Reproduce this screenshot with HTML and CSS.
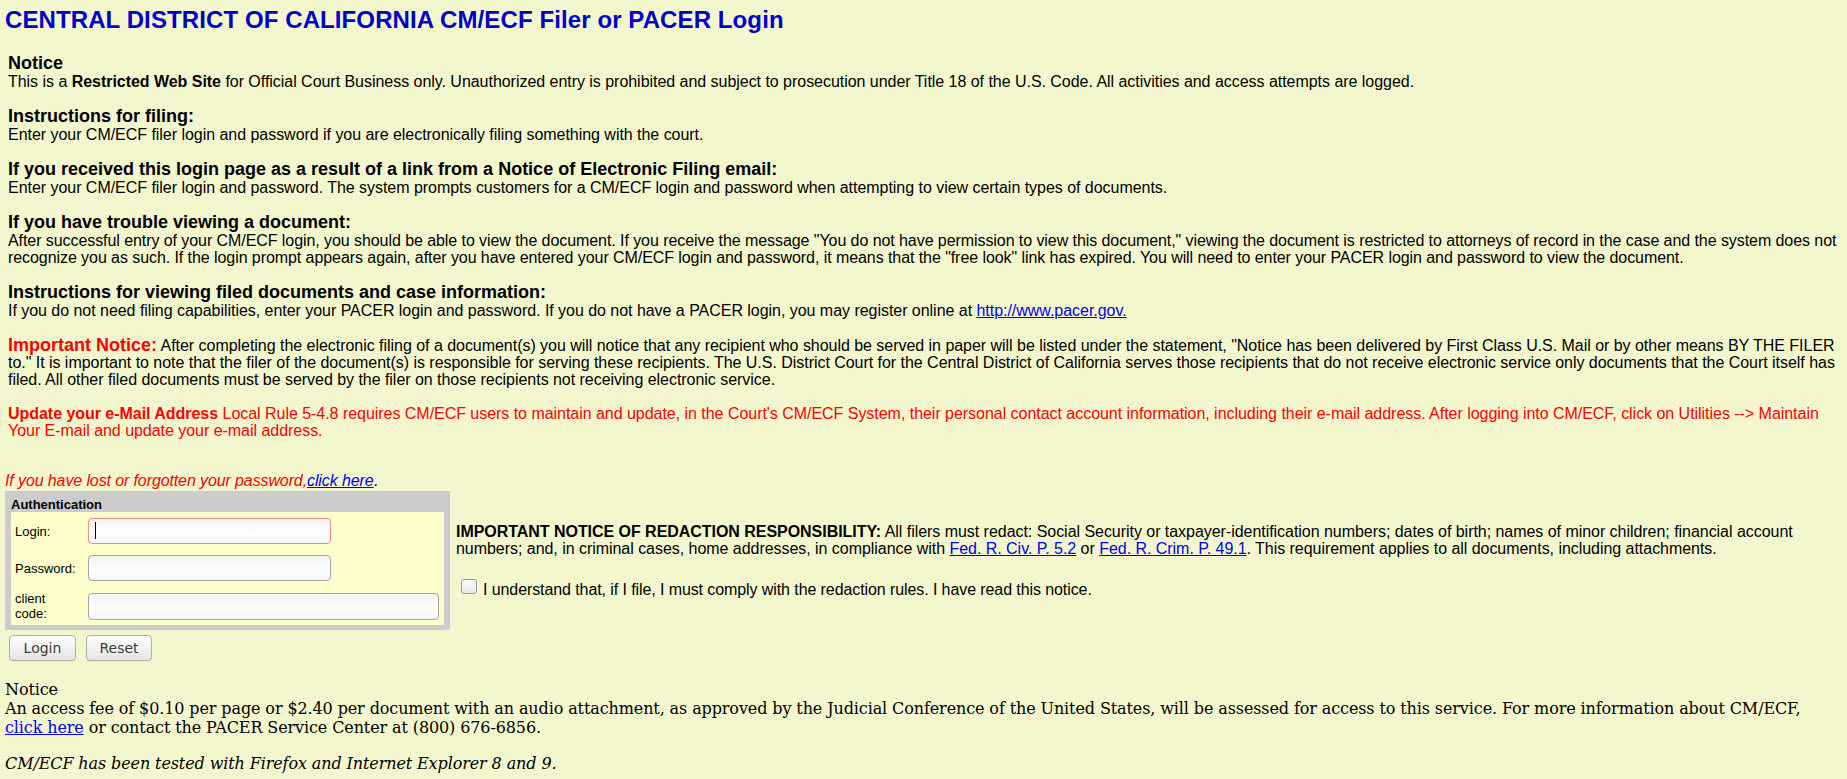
FILE: index.html
```html
<!DOCTYPE html>
<html>
<head>
<meta charset="utf-8">
<title>CM/ECF Login</title>
<link rel="stylesheet" href="styles.css">
</head>
<body>
<div class="page">
  <h1 class="title">CENTRAL DISTRICT OF CALIFORNIA CM/ECF Filer or PACER Login</h1>

  <div class="notice">
    <div class="sec">
      <h2 class="sec-head">Notice</h2>
      <p class="sec-body">This is a <b>Restricted Web Site</b> for Official Court Business only. Unauthorized entry is prohibited and subject to prosecution under Title 18 of the U.S. Code. All activities and access attempts are logged.</p>
    </div>
    <div class="sec">
      <h2 class="sec-head">Instructions for filing:</h2>
      <p class="sec-body">Enter your CM/ECF filer login and password if you are electronically filing something with the court.</p>
    </div>
    <div class="sec">
      <h2 class="sec-head">If you received this login page as a result of a link from a Notice of Electronic Filing email:</h2>
      <p class="sec-body">Enter your CM/ECF filer login and password. The system prompts customers for a CM/ECF login and password when attempting to view certain types of documents.</p>
    </div>
    <div class="sec">
      <h2 class="sec-head">If you have trouble viewing a document:</h2>
      <p class="sec-body sec-body-tight">After successful entry of your CM/ECF login, you should be able to view the document. If you receive the message "You do not have permission to view this document," viewing the document is restricted to attorneys of record in the case and the system does not recognize you as such. If the login prompt appears again, after you have entered your CM/ECF login and password, it means that the "free look" link has expired. You will need to enter your PACER login and password to view the document.</p>
    </div>
    <div class="sec">
      <h2 class="sec-head">Instructions for viewing filed documents and case information:</h2>
      <p class="sec-body">If you do not need filing capabilities, enter your PACER login and password. If you do not have a PACER login, you may register online at <a href="#">http://www.pacer.gov.</a></p>
    </div>
    <div class="sec sec-important">
      <p class="sec-body"><span class="imp-label">Important Notice:</span> After completing the electronic filing of a document(s) you will notice that any recipient who should be served in paper will be listed under the statement, "Notice has been delivered by First Class U.S. Mail or by other means BY THE FILER to." It is important to note that the filer of the document(s) is responsible for serving these recipients. The U.S. District Court for the Central District of California serves those recipients that do not receive electronic service only documents that the Court itself has filed. All other filed documents must be served by the filer on those recipients not receiving electronic service.</p>
    </div>
    <div class="sec sec-update">
      <p class="sec-body red"><b>Update your e-Mail Address</b> Local Rule 5-4.8 requires CM/ECF users to maintain and update, in the Court's CM/ECF System, their personal contact account information, including their e-mail address. After logging into CM/ECF, click on Utilities --&gt; Maintain Your E-mail and update your e-mail address.</p>
    </div>
  </div>

  <p class="lost">If you have lost or forgotten your password,<a href="#">click here</a><span class="dot">.</span></p>

  <div class="auth-row">
    <div class="authbox">
      <div class="auth-title">Authentication</div>
      <div class="auth-grid">
        <label class="auth-label">Login:</label>
        <span class="field field-focus"><input class="inp inp-short inp-focus" type="text"></span>
        <label class="auth-label">Password:</label>
        <span class="field"><input class="inp inp-short" type="password"></span>
        <label class="auth-label auth-label-2">client code:</label>
        <span class="field"><input class="inp inp-long" type="text"></span>
      </div>
    </div>
    <div class="redact">
      <p class="redact-text"><b>IMPORTANT NOTICE OF REDACTION RESPONSIBILITY:</b> All filers must redact: Social Security or taxpayer-identification numbers; dates of birth; names of minor children; financial account numbers; and, in criminal cases, home addresses, in compliance with <a href="#">Fed. R. Civ. P. 5.2</a> or <a href="#">Fed. R. Crim. P. 49.1</a>. This requirement applies to all documents, including attachments.</p>
      <p class="agree"><input class="chk" type="checkbox">I understand that, if I file, I must comply with the redaction rules. I have read this notice.</p>
    </div>
  </div>

  <div class="buttons">
    <button class="btn btn-login" type="button">Login</button>
    <button class="btn btn-reset" type="button">Reset</button>
  </div>

  <div class="footer">
    <div class="foot-text">Notice<br>An access fee of $0.10 per page or $2.40 per document with an audio attachment, as approved by the Judicial Conference of the United States, will be assessed for access to this service. For more information about CM/ECF, <a href="#">click here</a> or contact the PACER Service Center at (800) 676-6856.</div>
    <p class="tested">CM/ECF has been tested with Firefox and Internet Explorer 8 and 9.</p>
  </div>
</div>
</body>
</html>
```

FILE: styles.css
```css
html, body {
  margin: 0;
  padding: 0;
}

body {
  background: #f4f7cd;
  color: #000;
  font-family: "Liberation Sans", Arial, sans-serif;
  font-size: 16px;
}

a {
  color: #0000ee;
  text-decoration: underline;
}

.page {
  padding: 6px 5px 0 5px;
}

.title {
  margin: 0;
  font-size: 24px;
  line-height: 27px;
  font-weight: bold;
  color: #0000cc;
  letter-spacing: 0.1px;
}

.notice {
  margin-top: 20.5px;
  margin-right: -3px;
  padding-left: 3px;
}

.sec + .sec {
  margin-top: 16.8px;
}

.sec.sec-important {
  margin-top: 17.3px;
}

.sec.sec-update {
  margin-top: 16.5px;
}

.sec-head {
  margin: 0;
  font-size: 18px;
  line-height: 19px;
  font-weight: bold;
}

.sec-body {
  margin: 0;
  font-size: 16px;
  line-height: 17.3px;
  letter-spacing: -0.035px;
}

.sec-body-tight {
  letter-spacing: -0.07px;
}

.red {
  color: #ff0000;
}

.imp-label {
  color: #ff0000;
  font-weight: bold;
  font-size: 18px;
  letter-spacing: 0;
}

.lost {
  margin: 32px 0 0 0;
  font-style: italic;
  color: #ff0000;
  line-height: 17.3px;
  letter-spacing: -0.11px;
}

.dot {
  color: #000;
  font-style: normal;
}

.auth-row {
  display: flex;
  align-items: center;
  gap: 6px;
  margin-top: 2.3px;
}

.authbox {
  flex: none;
  width: 433px;
  background: #cccccc;
  padding: 6px 6px 5px 6px;
}

.auth-title {
  font-size: 13px;
  line-height: 15px;
  font-weight: bold;
}

.auth-grid {
  background: #ffffcc;
  display: grid;
  grid-template-columns: 60px 1fr;
  grid-template-rows: 26px 26px 29px;
  column-gap: 13px;
  row-gap: 11px;
  padding: 6px 5px 4px 4px;
  align-items: center;
}

.auth-label {
  font-size: 13px;
  line-height: 15px;
}

.auth-label-2 {
  line-height: 14.5px;
}

.field {
  position: relative;
  display: flex;
  align-items: center;
}

.inp {
  box-sizing: border-box;
  margin: 0;
  height: 26px;
  border: 1px solid #a6a6a6;
  border-radius: 4px;
  background: linear-gradient(to bottom, #f4f4f4, #fdfdfd 60%, #f6f6f6);
  font-family: "DejaVu Sans", sans-serif;
  font-size: 13px;
  padding: 0 6px;
  outline: none;
}

.inp-short {
  width: 243px;
}

.inp-long {
  width: 351px;
  height: 27px;
}

.inp-focus {
  border-color: #e5937e;
  box-shadow: 0 0 1px rgba(229, 120, 100, 0.5);
}

.field-focus::after {
  content: "";
  position: absolute;
  left: 7px;
  top: 4px;
  width: 1px;
  height: 17px;
  background: #000;
}

.redact {
  flex: 1;
  min-width: 0;
  font-size: 16px;
  letter-spacing: -0.04px;
}

.redact-text {
  margin: 0;
  line-height: 17px;
}

.agree {
  margin: 22px 0 0 0;
  line-height: 17.3px;
  letter-spacing: -0.09px;
}

.chk {
  -webkit-appearance: none;
  appearance: none;
  box-sizing: border-box;
  display: inline-block;
  width: 16px;
  height: 15px;
  margin: 0 6px 1px 5px;
  vertical-align: baseline;
  border: 1px solid #9c9c9c;
  border-radius: 3px;
  background: linear-gradient(to bottom, #fdfdfd, #e7e7e7);
}

.buttons {
  display: flex;
  gap: 10px;
  margin-top: 5px;
  padding-left: 4px;
}

.btn {
  box-sizing: border-box;
  height: 26px;
  margin: 0;
  padding: 0;
  border: 1px solid #aeaeae;
  border-radius: 4px;
  background: linear-gradient(to bottom, #ffffff, #e4e4e4);
  box-shadow: 0 1px 0 rgba(0, 0, 0, 0.06);
  font-family: "DejaVu Sans", sans-serif;
  font-size: 14px;
  color: #3c3c3c;
}

.btn-login {
  width: 67px;
}

.btn-reset {
  width: 66px;
}

.footer {
  margin-top: 19px;
  font-family: "DejaVu Serif", serif;
  font-size: 16px;
  letter-spacing: -0.11px;
}

.foot-text {
  line-height: normal;
}

.tested {
  margin: 17px 0 0 0;
  font-style: italic;
}
```
